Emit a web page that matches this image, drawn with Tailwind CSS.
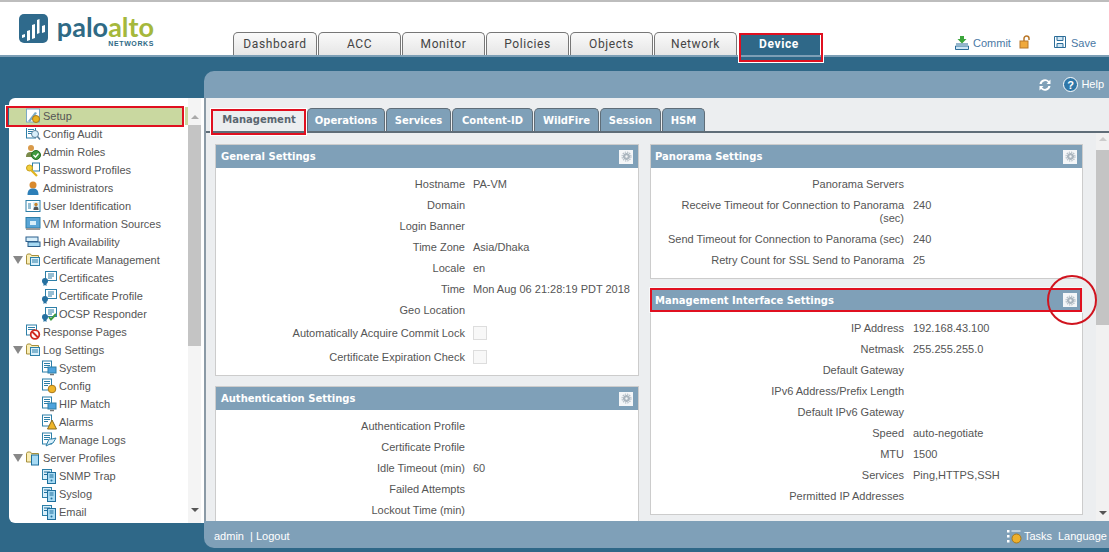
<!DOCTYPE html>
<html lang="en">
  <head>
    <meta charset="utf-8" />
    <title>Palo Alto Networks</title>
    <script src="https://cdn.jsdelivr.net/npm/@tailwindcss/browser@4"></script>
  </head>
  <body class="relative w-[1109px] h-[552px] overflow-hidden bg-[#2f6888] font-['Liberation_Sans',sans-serif] text-[11px] text-[#555]">
    <!-- icon sheet -->
    <svg class="hidden">
      <symbol id="folder" viewBox="0 0 16 16"><path d="M1.500 12V3.500l1-1.500h3l1 1.500h7V12z" fill="#fbeeb5" stroke="#a58f3c"/><rect x="5.500" y="5.500" width="9" height="8" fill="#d9effa" stroke="#2d7fa8"/><path d="M7 8h6M7 10h6" stroke="#2d7fa8"/></symbol>
      <symbol id="cert" viewBox="0 0 16 16"><rect x="4.500" y="1.500" width="11" height="9" fill="#fff" stroke="#2d7fa8"/><path d="M7 4h6M7 6h6M7 8h4" stroke="#2d7fa8"/><circle cx="4" cy="11" r="3" fill="#2570a0"/><path d="M2.500 13l0 3 1.500-1 1.500 1 0-3" fill="#2570a0"/></symbol>
      <symbol id="server" viewBox="0 0 16 16"><rect x="1.500" y="1.500" width="9" height="10" fill="#d9effa" stroke="#2d7fa8"/><rect x="6.500" y="4.500" width="8" height="11" fill="#a7daf3" stroke="#1f6f9c"/><path d="M3 4h6M3 6.500h3M8.500 7h4M8.500 9h4" stroke="#1f6f9c"/><circle cx="10.500" cy="12.500" r="1" fill="#1f6f9c"/></symbol>
      <symbol id="log" viewBox="0 0 16 16"><rect x="1.500" y="1" width="9" height="11" fill="#fff" stroke="#2d7fa8"/><path d="M3 3.500h6M3 5.500h6M3 7.500h4" stroke="#2d7fa8"/></symbol>
      <symbol id="gear" viewBox="0 0 16 16"><circle cx="8" cy="8" r="3.500" fill="none" stroke="currentColor" stroke-width="3.400"/><circle cx="8" cy="8" r="6.500" fill="none" stroke="currentColor" stroke-width="1.500" stroke-dasharray="2 1.400"/></symbol>
    </svg>

    <!-- Section header -->
    <header class="flex h-[57px] bg-white border-t-2 border-t-[#bdbdbd] border-b-2 border-b-[#7d9fb6]">
      <div class="flex w-[233px] pl-[19px] pt-[12px]">
        <svg class="w-[29px] h-[29px]" viewBox="0 0 29 29"><rect width="29" height="29" rx="5" fill="#2f6a8c"/><path d="M3 21l3-1v3l-3 1zM8 17l3-1v10l-3 1zM13 11l3-1v14l-3 1zM18 6l2.500-1v14l-2.500 1zM23 12l3-1v7l-3 1z" fill="#fff"/></svg>
        <div class="ml-[7px] -mt-[1px] flex flex-col items-end w-[99px]">
          <div class="font-['Lato',sans-serif] font-bold text-[27px] leading-[28px]"><span class="text-[#2f6a85]">palo</span><span class="text-[#a5b83c]">alto</span></div>
          <div class="font-['Liberation_Sans',sans-serif] font-bold text-[7px] leading-[6px] text-[#2f6a85] tracking-[0.6px]">NETWORKS</div>
        </div>
      </div>
      <nav class="flex items-end gap-px font-['Roboto',sans-serif] text-[12px] tracking-[0.6px] text-[#444]">
        <a class="flex items-center justify-center w-[84px] h-[23px] rounded-t-[5px] border border-b-0 border-[#777] bg-linear-to-b from-[#fafafa] to-[#e6e6e6]">Dashboard</a>
        <a class="flex items-center justify-center w-[83px] h-[23px] rounded-t-[5px] border border-b-0 border-[#777] bg-linear-to-b from-[#fafafa] to-[#e6e6e6]">ACC</a>
        <a class="flex items-center justify-center w-[83px] h-[23px] rounded-t-[5px] border border-b-0 border-[#777] bg-linear-to-b from-[#fafafa] to-[#e6e6e6]">Monitor</a>
        <a class="flex items-center justify-center w-[83px] h-[23px] rounded-t-[5px] border border-b-0 border-[#777] bg-linear-to-b from-[#fafafa] to-[#e6e6e6]">Policies</a>
        <a class="flex items-center justify-center w-[83px] h-[23px] rounded-t-[5px] border border-b-0 border-[#777] bg-linear-to-b from-[#fafafa] to-[#e6e6e6]">Objects</a>
        <a class="flex items-center justify-center w-[83px] h-[23px] rounded-t-[5px] border border-b-0 border-[#777] bg-linear-to-b from-[#fafafa] to-[#e6e6e6]">Network</a>
        <a class="flex items-center justify-center w-[82px] h-[23px] bg-[#2f6888] text-white font-bold">Device</a>
      </nav>
      <div class="flex items-start pt-[33px] text-[#4a78a4] text-[11px] leading-[14px]">
        <svg class="ml-[134px] w-[16px] h-[16px] shrink-0" viewBox="0 0 16 16"><path d="M6 1h4v3h2.500L8 8.500 3.500 4H6z" fill="#3ca63c"/><path d="M2 9h12M1.500 11h13v3.500h-13z" fill="#cfe6f5" stroke="#2b6c98"/></svg>
        <span class="ml-[3px] mt-[1px] w-[37px]">Commit</span>
        <svg class="ml-[9px] w-[12px] h-[14px] shrink-0" viewBox="0 0 12 14"><path d="M5 6V3.500a2.500 2.500 0 0 1 5 0V5" fill="none" stroke="#b9782a" stroke-width="1.500"/><rect x="1" y="6" width="8" height="7" fill="#f0a93c" stroke="#b9782a"/></svg>
        <svg class="ml-[22px] w-[14px] h-[14px] shrink-0" viewBox="0 0 14 14"><path d="M1.500 1.500h11v11h-11z" fill="#fff" stroke="#2b6c98"/><path d="M4 1.500h6v4H4zM4 8.500h6v4H4z" fill="#cfe6f5" stroke="#2b6c98"/></svg>
        <span class="ml-[4px] mt-[1px]">Save</span>
      </div>
    </header>

    <div class="flex pt-[14px]">
      <!-- Section tree -->
      <aside class="flex mt-[27px] ml-[9px] w-[195px] h-[425px] bg-white rounded-l-[6px] overflow-hidden">
        <ul class="w-[179px] pt-[9px] leading-[18px] whitespace-nowrap">
          <li class="flex items-center h-[18px] pl-[16px] bg-[#c9d8a0]"><svg class="w-[16px] h-[16px] mr-[2px]" viewBox="0 0 16 16"><rect x="1.500" y="1" width="13" height="13" fill="#fff" stroke="#7aa9c6"/><path d="M3 13L10 4l2 1-7 9z" fill="#7aa9c6"/><circle cx="11" cy="11" r="3.500" fill="#e8b320" stroke="#a9781a"/></svg>Setup</li>
          <li class="flex items-center h-[18px] pl-[16px]"><svg class="w-[16px] h-[16px] mr-[2px]" viewBox="0 0 16 16"><use href="#log"/><circle cx="10" cy="8" r="3.500" fill="#d9effa" stroke="#5a7f99"/><path d="M12.500 10.500l2.500 3" stroke="#5a7f99" stroke-width="1.500"/></svg>Config Audit</li>
          <li class="flex items-center h-[18px] pl-[16px]"><svg class="w-[16px] h-[16px] mr-[2px]" viewBox="0 0 16 16"><circle cx="6" cy="4" r="3" fill="#d99a4a"/><path d="M1 13c0-4 2-5 5-5s5 1 5 5z" fill="#7a8a4a"/><circle cx="11" cy="11" r="4.500" fill="#3f9a3f" stroke="#276d27"/><path d="M8.500 11l2 2 3-3.500" fill="none" stroke="#fff" stroke-width="1.300"/></svg>Admin Roles</li>
          <li class="flex items-center h-[18px] pl-[16px]"><svg class="w-[16px] h-[16px] mr-[2px]" viewBox="0 0 16 16"><rect x="7.500" y="1" width="7" height="8" fill="#fff" stroke="#2d7fa8"/><circle cx="4.500" cy="6" r="3" fill="#f2cf3c" stroke="#c79f1c"/><path d="M6 8l6 6" stroke="#e0b420" stroke-width="2.200"/></svg>Password Profiles</li>
          <li class="flex items-center h-[18px] pl-[16px]"><svg class="w-[16px] h-[16px] mr-[2px]" viewBox="0 0 16 16"><circle cx="8" cy="5" r="3.500" fill="#d98a2e"/><path d="M2.500 15c0-5 2-6.500 5.500-6.500s5.500 1.500 5.500 6.500z" fill="#2d7fb8"/></svg>Administrators</li>
          <li class="flex items-center h-[18px] pl-[16px]"><svg class="w-[16px] h-[16px] mr-[2px]" viewBox="0 0 16 16"><rect x="1" y="2.500" width="14" height="11" fill="#fff" stroke="#2d7fa8"/><path d="M3 6h3M3 8h3M3 10h3" stroke="#2d7fa8"/><rect x="8" y="4" width="6" height="8" fill="#d9effa"/><circle cx="11" cy="6.500" r="1.700" fill="#c9852c"/><path d="M8.500 12c0-3 1-3.500 2.500-3.500s2.500.5 2.500 3.500z" fill="#555"/></svg>User Identification</li>
          <li class="flex items-center h-[18px] pl-[16px]"><svg class="w-[16px] h-[16px] mr-[2px]" viewBox="0 0 16 16"><rect x="1" y="1.500" width="14" height="10.500" fill="#5aa5d6" stroke="#2d7fa8"/><path d="M1 12h14v2H1z" fill="#9a9a9a"/><path d="M5 5h6v4H5z" fill="#d9effa"/></svg>VM Information Sources</li>
          <li class="flex items-center h-[18px] pl-[16px]"><svg class="w-[16px] h-[16px] mr-[2px]" viewBox="0 0 16 16"><rect x="1" y="3" width="12" height="4.500" fill="#d9effa" stroke="#2b5f8c"/><rect x="3" y="8" width="12" height="4.500" fill="#a7daf3" stroke="#2b5f8c"/></svg>High Availability</li>
          <li class="flex items-center h-[18px] pl-[4px]"><span class="mr-[2px] w-0 h-0 border-x-[5px] border-x-transparent border-t-[8px] border-t-[#888]"></span><svg class="w-[16px] h-[16px] mr-[2px]"><use href="#folder"/></svg>Certificate Management</li>
          <li class="flex items-center h-[18px] pl-[32px]"><svg class="w-[16px] h-[16px] mr-[2px]"><use href="#cert"/></svg>Certificates</li>
          <li class="flex items-center h-[18px] pl-[32px]"><svg class="w-[16px] h-[16px] mr-[2px]"><use href="#cert"/></svg>Certificate Profile</li>
          <li class="flex items-center h-[18px] pl-[32px]"><svg class="w-[16px] h-[16px] mr-[2px]" viewBox="0 0 16 16"><use href="#cert"/><path d="M8 11l2 2.500 5-5.500" fill="none" stroke="#3f9a3f" stroke-width="2"/></svg>OCSP Responder</li>
          <li class="flex items-center h-[18px] pl-[16px]"><svg class="w-[16px] h-[16px] mr-[2px]" viewBox="0 0 16 16"><rect x="1.500" y="1" width="10" height="10" fill="#fff" stroke="#2d7fa8"/><path d="M3 3.500h7M3 5.500h7" stroke="#2d7fa8"/><circle cx="10" cy="10.500" r="4.300" fill="#fff" stroke="#d02b20" stroke-width="1.800"/><path d="M7 7.500l6 6" stroke="#d02b20" stroke-width="1.800"/></svg>Response Pages</li>
          <li class="flex items-center h-[18px] pl-[4px]"><span class="mr-[2px] w-0 h-0 border-x-[5px] border-x-transparent border-t-[8px] border-t-[#888]"></span><svg class="w-[16px] h-[16px] mr-[2px]"><use href="#folder"/></svg>Log Settings</li>
          <li class="flex items-center h-[18px] pl-[32px]"><svg class="w-[16px] h-[16px] mr-[2px]" viewBox="0 0 16 16"><use href="#log"/><rect x="7" y="7" width="8" height="6" fill="#4da3dd" stroke="#2d7fa8"/><path d="M9 14.500h4" stroke="#777" stroke-width="1.500"/></svg>System</li>
          <li class="flex items-center h-[18px] pl-[32px]"><svg class="w-[16px] h-[16px] mr-[2px]" viewBox="0 0 16 16"><use href="#log"/><circle cx="11" cy="11" r="3.800" fill="#f0b528" stroke="#a9781a"/></svg>Config</li>
          <li class="flex items-center h-[18px] pl-[32px]"><svg class="w-[16px] h-[16px] mr-[2px]" viewBox="0 0 16 16"><use href="#log"/><rect x="7" y="7" width="8" height="6" fill="#4da3dd" stroke="#2d7fa8"/><path d="M9 14.500h4" stroke="#777" stroke-width="1.500"/></svg>HIP Match</li>
          <li class="flex items-center h-[18px] pl-[32px]"><svg class="w-[16px] h-[16px] mr-[2px]" viewBox="0 0 16 16"><use href="#log"/><path d="M11 6l4.500 9h-9z" fill="#f0b528" stroke="#8a6a1a"/></svg>Alarms</li>
          <li class="flex items-center h-[18px] pl-[32px]"><svg class="w-[16px] h-[16px] mr-[2px]" viewBox="0 0 16 16"><use href="#log"/><path d="M5 14l3-7h3l4-1-3 5-3 1z" fill="#d9effa" stroke="#2d7fa8"/></svg>Manage Logs</li>
          <li class="flex items-center h-[18px] pl-[4px]"><span class="mr-[2px] w-0 h-0 border-x-[5px] border-x-transparent border-t-[8px] border-t-[#888]"></span><svg class="w-[16px] h-[16px] mr-[2px]" viewBox="0 0 16 16"><path d="M1.500 12V3.500l1-1.500h3l1 1.500h7V12z" fill="#fbeeb5" stroke="#a58f3c"/><rect x="6.500" y="5" width="7" height="10" fill="#a7daf3" stroke="#1f6f9c"/></svg>Server Profiles</li>
          <li class="flex items-center h-[18px] pl-[32px]"><svg class="w-[16px] h-[16px] mr-[2px]"><use href="#server"/></svg>SNMP Trap</li>
          <li class="flex items-center h-[18px] pl-[32px]"><svg class="w-[16px] h-[16px] mr-[2px]"><use href="#server"/></svg>Syslog</li>
          <li class="flex items-center h-[18px] pl-[32px]"><svg class="w-[16px] h-[16px] mr-[2px]"><use href="#server"/></svg>Email</li>
        </ul>
        <div class="flex flex-col items-center w-[13px] bg-[#f4f4f4]">
          <span class="mt-[17px] w-0 h-0 border-x-[4px] border-x-transparent border-b-[4px] border-b-[#aaa]"></span>
          <div class="mt-[6px] w-full h-[221px] bg-[#c4c4c4]"></div>
          <span class="mt-[162px] w-0 h-0 border-x-[4px] border-x-transparent border-t-[4px] border-t-[#555]"></span>
        </div>
      </aside>

      <!-- Section main -->
      <main class="flex flex-col w-[905px] h-[477px] rounded-l-[10px] overflow-hidden bg-[#7fa0b8]">
        <div class="flex items-center justify-end shrink-0 h-[27px] pr-[5px] text-white text-[11px]">
          <svg class="w-[14px] h-[14px] mr-[11px]" viewBox="0 0 14 14"><path d="M1.500 6a5.500 5.500 0 0 1 9.500-3l1.500-1.500V6H8.500L10 4.500A3.500 3.500 0 0 0 3.700 6zM12.500 8A5.500 5.500 0 0 1 3 11l-1.500 1.500V8h4L4 9.500A3.500 3.500 0 0 0 10.300 8z" fill="#fff"/></svg>
          <svg class="w-[15px] h-[15px] mr-[3px]" viewBox="0 0 15 15"><circle cx="7.500" cy="7.500" r="7" fill="#2f77a8" stroke="#fff"/><text x="7.500" y="11.500" text-anchor="middle" font-size="11" font-weight="700" font-family="Liberation Sans" fill="#fff">?</text></svg>
          <span>Help</span>
        </div>

        <div class="flex flex-col h-[423px] bg-[#eceef0] border-l-2 border-l-[#8b9aa6]">
          <div class="flex shrink-0 h-[35px] pl-[6px] pt-[10px] border-b-2 border-b-[#5f6d78] font-['DejaVu_Sans',sans-serif] font-bold text-[10px] text-white">
            <a class="flex items-center justify-center w-[94px] text-[#5a6670]">Management</a>
            <a class="flex items-center justify-center w-[78px] ml-px rounded-t-[5px] border border-b-0 border-[#5f6d78] bg-[#7fa0b8]">Operations</a>
            <a class="flex items-center justify-center w-[65px] ml-px rounded-t-[5px] border border-b-0 border-[#5f6d78] bg-[#7fa0b8]">Services</a>
            <a class="flex items-center justify-center w-[81px] ml-px rounded-t-[5px] border border-b-0 border-[#5f6d78] bg-[#7fa0b8]">Content-ID</a>
            <a class="flex items-center justify-center w-[65px] ml-px rounded-t-[5px] border border-b-0 border-[#5f6d78] bg-[#7fa0b8]">WildFire</a>
            <a class="flex items-center justify-center w-[61px] ml-px rounded-t-[5px] border border-b-0 border-[#5f6d78] bg-[#7fa0b8]">Session</a>
            <a class="flex items-center justify-center w-[43px] ml-px rounded-t-[5px] border border-b-0 border-[#5f6d78] bg-[#7fa0b8]">HSM</a>
          </div>

          <div class="flex flex-1 min-h-0 overflow-hidden pl-[9px] pt-[11px]">
            <!-- left column -->
            <div class="flex flex-col gap-[10px] w-[424px] shrink-0">
              <section class="h-[232px] shrink-0 bg-white border border-[#ccc]">
                <h3 class="flex items-center justify-between h-[23px] pl-[5px] pr-[5px] bg-[#7fa0b8] font-['DejaVu_Sans',sans-serif] font-bold text-[10px] text-white">General Settings<span class="flex items-center justify-center w-[14px] h-[14px] bg-[#f4f6f8] text-[#aab5be]"><svg class="w-[11px] h-[11px]"><use href="#gear"/></svg></span></h3>
                <dl class="grid grid-cols-[249px_1fr] gap-x-[8px] pt-[6px] leading-[21px]">
                  <dt class="text-right">Hostname</dt><dd>PA-VM</dd>
                  <dt class="text-right">Domain</dt><dd></dd>
                  <dt class="text-right">Login Banner</dt><dd></dd>
                  <dt class="text-right">Time Zone</dt><dd>Asia/Dhaka</dd>
                  <dt class="text-right">Locale</dt><dd>en</dd>
                  <dt class="text-right">Time</dt><dd class="whitespace-nowrap">Mon Aug 06 21:28:19 PDT 2018</dd>
                  <dt class="text-right">Geo Location</dt><dd></dd>
                  <dt class="text-right h-[24px] leading-[24px]">Automatically Acquire Commit Lock</dt><dd class="flex items-center"><span class="w-[14px] h-[14px] border border-[#ddd] bg-[#f8f8f8]"></span></dd>
                  <dt class="text-right h-[24px] leading-[24px]">Certificate Expiration Check</dt><dd class="flex items-center"><span class="w-[14px] h-[14px] border border-[#ddd] bg-[#f8f8f8]"></span></dd>
                </dl>
              </section>
              <section class="h-[200px] shrink-0 bg-white border border-[#ccc]">
                <h3 class="flex items-center justify-between h-[23px] pl-[5px] pr-[5px] bg-[#7fa0b8] font-['DejaVu_Sans',sans-serif] font-bold text-[10px] text-white">Authentication Settings<span class="flex items-center justify-center w-[14px] h-[14px] bg-[#f4f6f8] text-[#aab5be]"><svg class="w-[11px] h-[11px]"><use href="#gear"/></svg></span></h3>
                <dl class="grid grid-cols-[249px_1fr] gap-x-[8px] pt-[6px] leading-[21px]">
                  <dt class="text-right">Authentication Profile</dt><dd></dd>
                  <dt class="text-right">Certificate Profile</dt><dd></dd>
                  <dt class="text-right">Idle Timeout (min)</dt><dd>60</dd>
                  <dt class="text-right">Failed Attempts</dt><dd></dd>
                  <dt class="text-right">Lockout Time (min)</dt><dd></dd>
                </dl>
              </section>
            </div>

            <!-- right column -->
            <div class="flex flex-col gap-[9px] w-[433px] shrink-0 ml-[11px]">
              <section class="h-[135px] shrink-0 bg-white border border-[#ccc]">
                <h3 class="flex items-center justify-between h-[23px] pl-[4px] pr-[5px] bg-[#7fa0b8] font-['DejaVu_Sans',sans-serif] font-bold text-[10px] text-white">Panorama Settings<span class="flex items-center justify-center w-[14px] h-[14px] bg-[#f4f6f8] text-[#aab5be]"><svg class="w-[11px] h-[11px]"><use href="#gear"/></svg></span></h3>
                <dl class="grid grid-cols-[253px_1fr] gap-x-[9px] pt-[6px] leading-[21px]">
                  <dt class="text-right">Panorama Servers</dt><dd></dd>
                  <dt class="text-right pl-[24px] leading-[13px] pt-[4px] pb-[4px]">Receive Timeout for Connection to Panorama (sec)</dt><dd>240</dd>
                  <dt class="text-right">Send Timeout for Connection to Panorama (sec)</dt><dd>240</dd>
                  <dt class="text-right">Retry Count for SSL Send to Panorama</dt><dd>25</dd>
                </dl>
              </section>
              <section class="h-[227px] shrink-0 bg-white border border-[#ccc]">
                <h3 class="flex items-center justify-between h-[22px] pl-[4px] pr-[5px] bg-[#7fa0b8] font-['DejaVu_Sans',sans-serif] font-bold text-[10px] text-white">Management Interface Settings<span class="flex items-center justify-center w-[14px] h-[14px] bg-[#f4f6f8] text-[#aab5be]"><svg class="w-[11px] h-[11px]"><use href="#gear"/></svg></span></h3>
                <dl class="grid grid-cols-[253px_1fr] gap-x-[9px] pt-[7px] leading-[21px]">
                  <dt class="text-right">IP Address</dt><dd>192.168.43.100</dd>
                  <dt class="text-right">Netmask</dt><dd>255.255.255.0</dd>
                  <dt class="text-right">Default Gateway</dt><dd></dd>
                  <dt class="text-right">IPv6 Address/Prefix Length</dt><dd></dd>
                  <dt class="text-right">Default IPv6 Gateway</dt><dd></dd>
                  <dt class="text-right">Speed</dt><dd>auto-negotiate</dd>
                  <dt class="text-right">MTU</dt><dd>1500</dd>
                  <dt class="text-right">Services</dt><dd>Ping,HTTPS,SSH</dd>
                  <dt class="text-right">Permitted IP Addresses</dt><dd></dd>
                </dl>
              </section>
            </div>

            <!-- scrollbar -->
            <div class="flex flex-col items-center w-[14px] ml-[13px] -mt-[11px] bg-[#f1f1f1]">
              <span class="mt-[4px] w-0 h-0 border-x-[4px] border-x-transparent border-b-[4px] border-b-[#ccc]"></span>
              <div class="w-full h-[175px] mt-[9px] bg-[#c4c4c4]"></div>
              <span class="mt-[186px] w-0 h-0 border-x-[4px] border-x-transparent border-t-[4px] border-t-[#555]"></span>
            </div>
          </div>
        </div>

        <!-- Section footer -->
        <footer class="flex flex-1 items-center pl-[10px] pt-[3px] text-white text-[11px] whitespace-nowrap">
          <span class="w-[29px]">admin</span>
          <span class="ml-[7px] w-[3px]">|</span>
          <span class="ml-[3px] w-[33px]">Logout</span>
          <svg class="ml-[717px] w-[17px] h-[17px] shrink-0" viewBox="0 0 17 17"><path d="M1 2h2.500v2.500H1zM1 7h2.500v2.500H1zM1 12h2.500v2.500H1z" fill="#fff"/><path d="M5.500 3h9" stroke="#fff"/><circle cx="10.500" cy="10.500" r="4.500" fill="#eeb02c" stroke="#a9781a"/></svg>
          <span class="ml-[1px] w-[27px]">Tasks</span>
          <span class="ml-[7px]">Language</span>
        </footer>
      </main>
    </div>

    <!-- red annotations drawn over the shot -->
    <div class="absolute left-[6px] top-[106px] w-[178px] h-[21px] border-2 border-[#e01020] ring-1 ring-white"></div>
    <div class="absolute left-[211px] top-[109px] w-[95px] h-[26px] border-2 border-[#e01020] ring-1 ring-white"></div>
    <div class="absolute left-[739px] top-[33px] w-[84px] h-[29px] border-2 border-[#e01020] ring-1 ring-white"></div>
    <div class="absolute left-[650px] top-[288px] w-[432px] h-[24px] border-2 border-[#e01020] ring-1 ring-white/60"></div>
    <div class="absolute left-[1047px] top-[275px] w-[50px] h-[50px] rounded-full border-2 border-[#d0141f]"></div>
  </body>
</html>
